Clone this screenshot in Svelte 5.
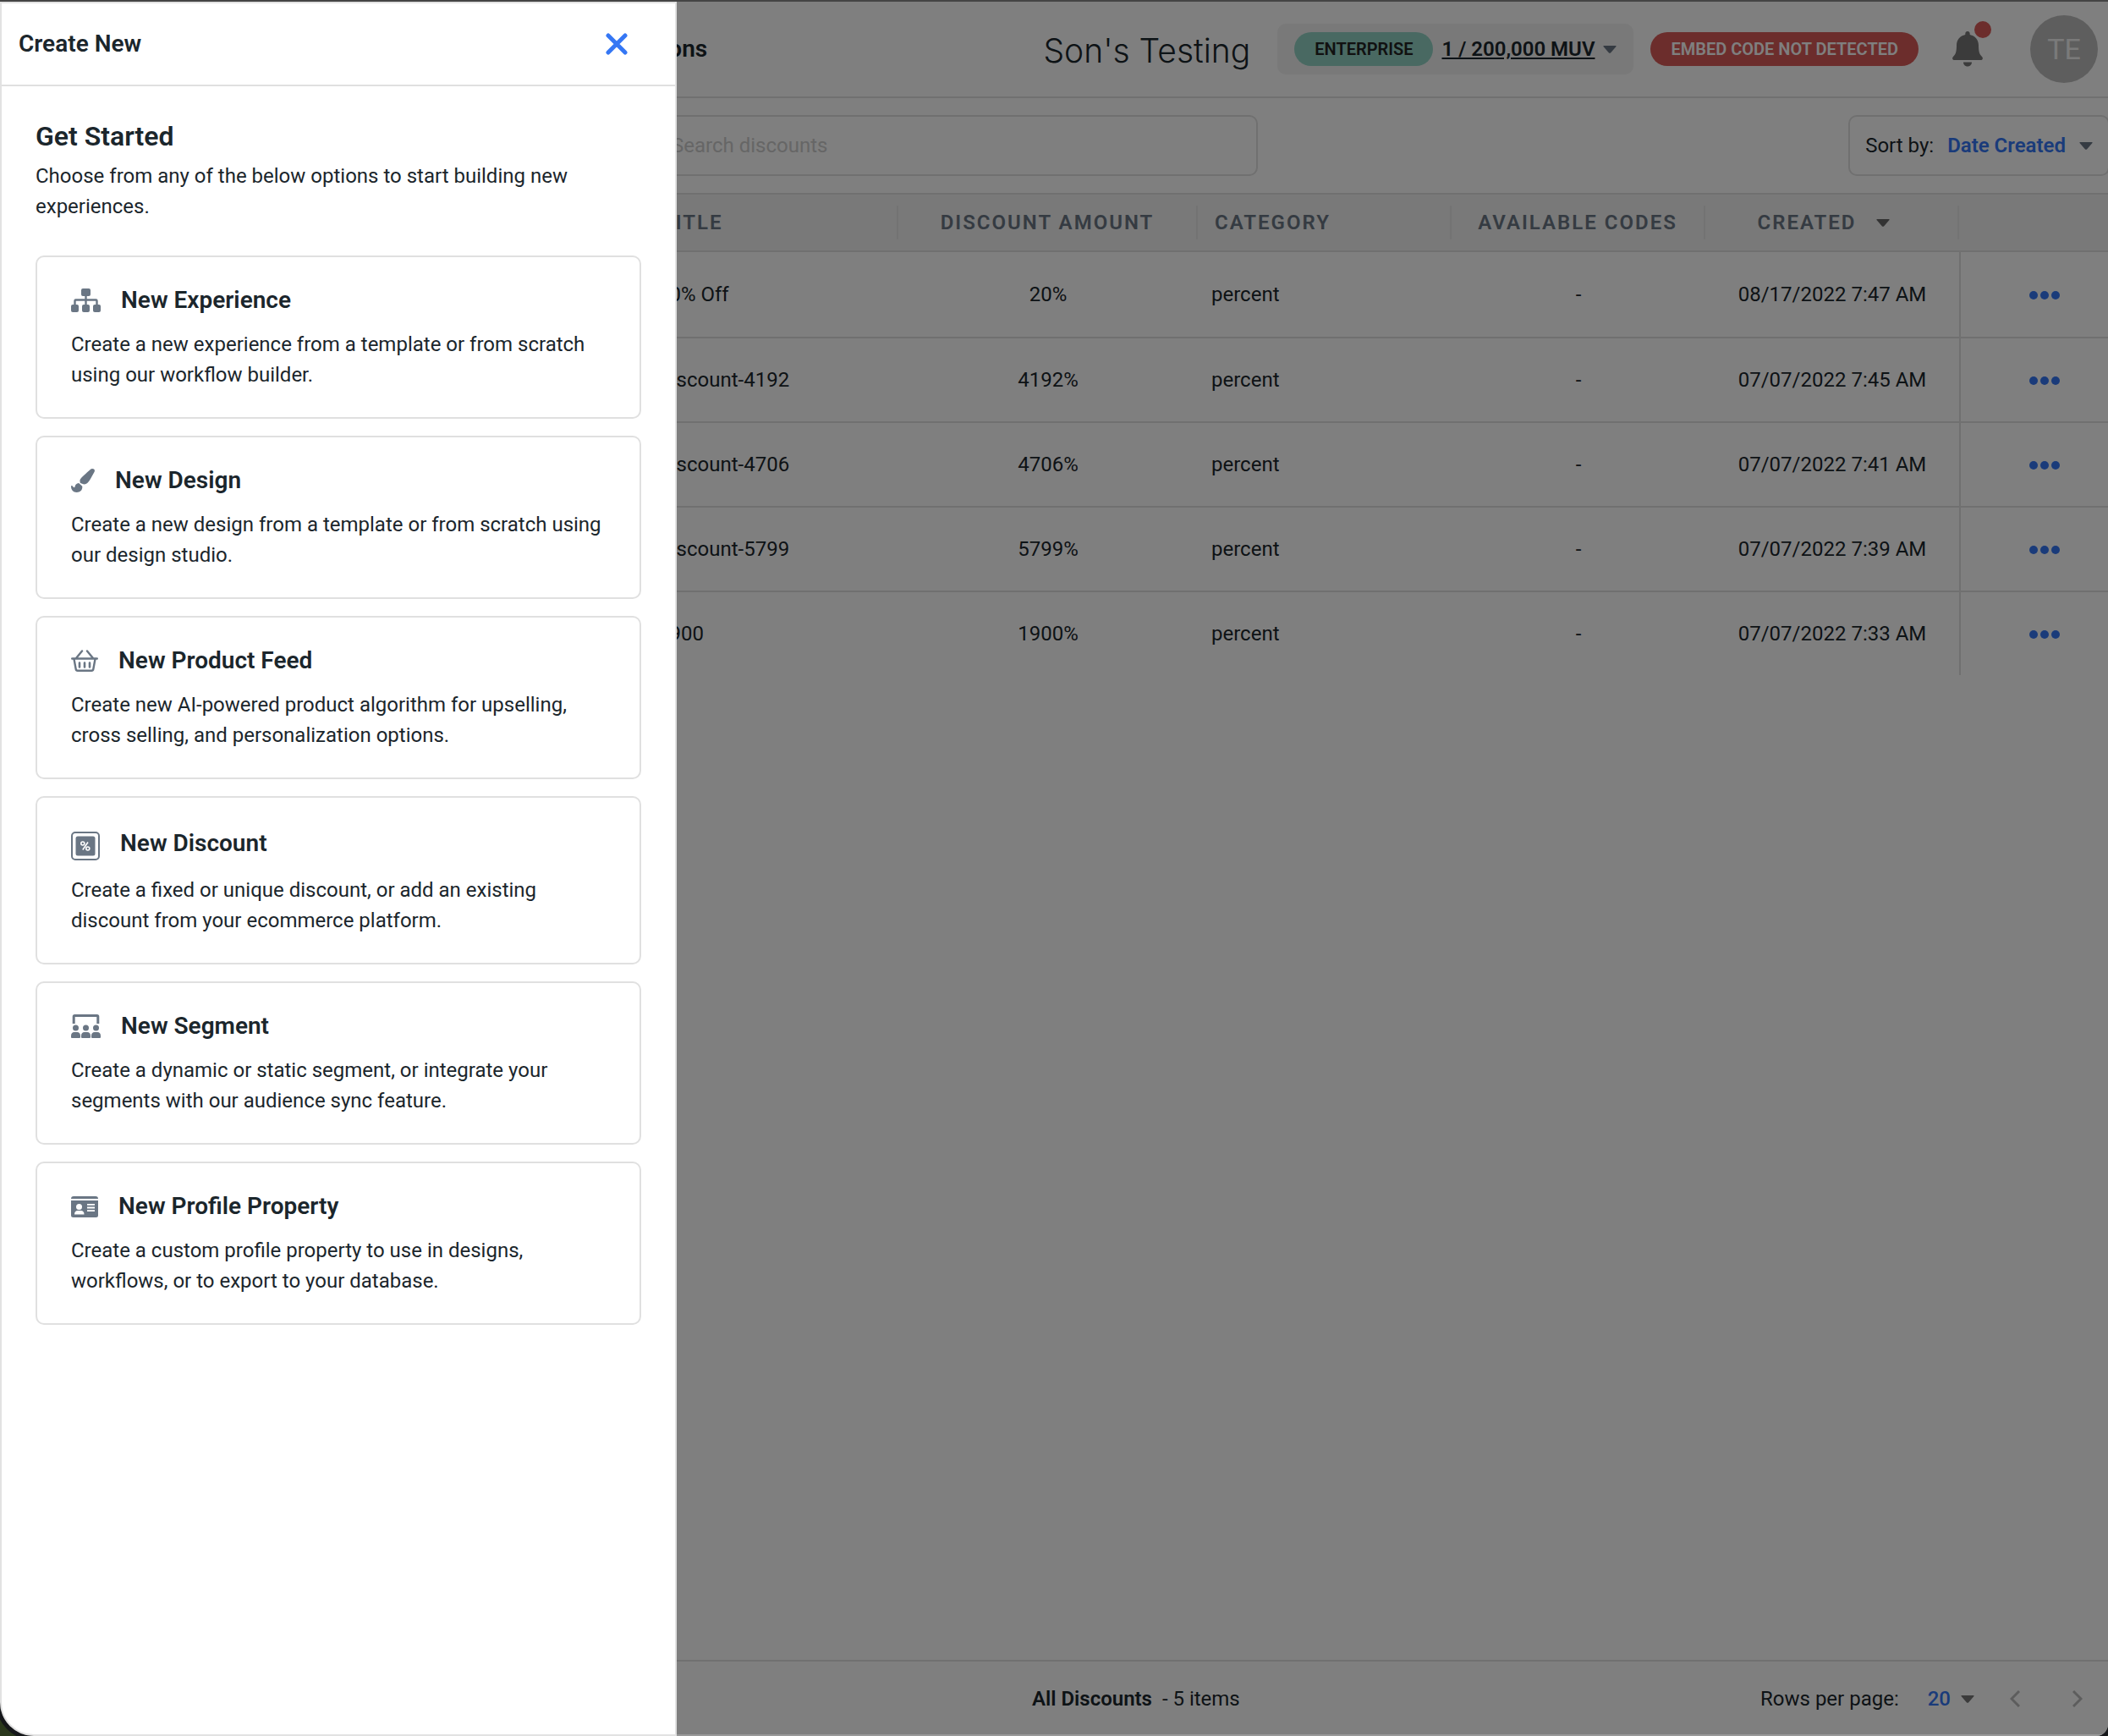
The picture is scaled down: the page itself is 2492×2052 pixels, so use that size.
<script>
  const options = [
    {
      icon: "sitemap",
      title: "New Experience",
      text: "Create a new experience from a template or from scratch using our workflow builder.",
    },
    {
      icon: "brush",
      title: "New Design",
      text: "Create a new design from a template or from scratch using our design studio.",
    },
    {
      icon: "basket",
      title: "New Product Feed",
      text: "Create new AI-powered product algorithm for upselling, cross selling, and personalization options.",
    },
    {
      icon: "discount",
      title: "New Discount",
      text: "Create a fixed or unique discount, or add an existing discount from your ecommerce platform.",
    },
    {
      icon: "segment",
      title: "New Segment",
      text: "Create a dynamic or static segment, or integrate your segments with our audience sync feature.",
    },
    {
      icon: "profile",
      title: "New Profile Property",
      text: "Create a custom profile property to use in designs, workflows, or to export to your database.",
    },
  ];

  const discounts = [
    { title: "20% Off", amount: "20%", created: "08/17/2022 7:47 AM" },
    { title: "Discount-4192", amount: "4192%", created: "07/07/2022 7:45 AM" },
    { title: "Discount-4706", amount: "4706%", created: "07/07/2022 7:41 AM" },
    { title: "Discount-5799", amount: "5799%", created: "07/07/2022 7:39 AM" },
    { title: "1900", amount: "1900%", created: "07/07/2022 7:33 AM" },
  ];

  let search = $state("");
  let open = $state(true);
</script>

{#snippet caret()}
  <svg class="caret" width="16" height="9" viewBox="0 0 16 9" aria-hidden="true">
    <path d="M1 0h14q1 0 .5 1L9 8.400q-1 .8-2 0L.5 1Q0 0 1 0z" />
  </svg>
{/snippet}

{#snippet optionIcon(name)}
  {#if name === "sitemap"}
    <svg width="35" height="28" viewBox="0 0 35 28" aria-hidden="true">
      <rect x="12" y="0" width="11" height="9" rx="2" />
      <path d="M17.500 8v11M4.500 19v-4.500q0-1 1-1h24q1 0 1 1V19" fill="none" stroke="currentColor" stroke-width="2.400" />
      <rect x="0" y="19" width="9" height="9" rx="2" />
      <rect x="13" y="19" width="9" height="9" rx="2" />
      <rect x="26" y="19" width="9" height="9" rx="2" />
    </svg>
  {:else if name === "brush"}
    <svg width="28" height="28" viewBox="0 0 512 512" aria-hidden="true">
      <path d="M167 309c-47 1-84 39-84 86 0 5-6 12-17 10-20-9-36-40-50-40-8 0-16 6-16 16 0 77 44 131 123 131 67 0 121-38 121-117 0-5-1-9-2-14zM458 0c-15 0-30 7-41 17C213 199 192 214 192 270c0 14 3 28 9 41l63 23c7 2 14 3 22 3 64 0 100-46 211-254 7-14 14-29 14-44 0-24-26-39-53-39z" />
    </svg>
  {:else if name === "basket"}
    <svg width="32" height="26" viewBox="0 0 32 26" aria-hidden="true">
      <g fill="none" stroke="currentColor" stroke-linecap="round" stroke-linejoin="round">
        <path d="M6 10l7-8.500M26 10l-7-8.500M1.200 10.500h29.600" stroke-width="2.400" />
        <path d="M3.500 11l2.200 12q.3 1.700 2 1.700h16.600q1.700 0 2-1.700l2.200-12" stroke-width="2.400" />
        <path d="M10 15.500v5M16 15.500v5M22 15.500v5" stroke-width="2.600" />
      </g>
    </svg>
  {:else if name === "discount"}
    <svg width="34" height="42" viewBox="0 -7 34 42" aria-hidden="true">
      <rect x="1" y="1" width="32" height="32" rx="4" fill="none" stroke="currentColor" stroke-width="2" />
      <rect x="5.500" y="5.500" width="23" height="23" rx="2.500" />
      <g fill="none" stroke="#fff" stroke-width="1.600">
        <circle cx="13.800" cy="14" r="2" />
        <circle cx="19.800" cy="20" r="2" />
        <path d="M20 12.500l-6.200 9" />
      </g>
    </svg>
  {:else if name === "segment"}
    <svg width="35" height="28" viewBox="0 0 35 28" aria-hidden="true">
      <path d="M3.200 11V2.500q0-1 1-1h26.600q1 0 1 1V11" fill="none" stroke="currentColor" stroke-width="3" />
      <circle cx="5.500" cy="16" r="3.500" />
      <circle cx="17.500" cy="16" r="3.500" />
      <circle cx="29.500" cy="16" r="3.500" />
      <path d="M0 27v-1.500q0-4.500 4-4.500h3q4 0 4 4.500v1.500q0 1-1 1h-9q-1 0-1-1zM12 27v-1.500q0-4.500 4-4.500h3q4 0 4 4.500v1.500q0 1-1 1h-9q-1 0-1-1zM24 27v-1.500q0-4.500 4-4.500h3q4 0 4 4.500v1.500q0 1-1 1h-9q-1 0-1-1z" />
    </svg>
  {:else}
    <svg width="32" height="25" viewBox="0 0 32 25" aria-hidden="true">
      <path d="M0 3q0-3 3-3h26q3 0 3 3zM0 5h32v17.500q0 2.500-2.500 2.500h-27q-2.500 0-2.500-2.500z" />
      <g fill="#fff">
        <circle cx="9.500" cy="12.500" r="3.500" />
        <path d="M4 21.500q0-4.500 4-4.500h3.500q4 0 4 4.500z" />
        <path d="M19 9h9v1.800h-9zM19 12.600h9v1.800h-9zM19 16.200h9V18h-9z" />
      </g>
    </svg>
  {/if}
{/snippet}

<div class="window">
  <div class="page">
    <header class="topbar">
      <h1>Promotions</h1>
      <div class="account">
        <span class="company">Son's Testing</span>
        <div class="plan">
          <span class="pill enterprise">ENTERPRISE</span>
          <button class="muv"><span>1 / 200,000 MUV</span>{@render caret()}</button>
        </div>
        <span class="pill missing">EMBED CODE NOT DETECTED</span>
        <button class="bell" aria-label="Notifications">
          <svg width="36" height="42" viewBox="0 0 36 42" aria-hidden="true">
            <path d="M18 0c1.700 0 2.700 1.200 2.700 2.800v1.300c6 1.300 10.300 6.200 10.300 12.400 0 7.500 1 10.500 4 13.500 1.800 1.800.8 4-1.600 4H2.600C.2 34-.8 31.800 1 30c3-3 4-6 4-13.500 0-6.200 4.300-11.100 10.300-12.400V2.800C15.300 1.200 16.300 0 18 0zM13 36.500h10C23 39.300 21 41.500 18 41.500s-5-2.200-5-5z" />
          </svg>
          <span class="dot"></span>
        </button>
        <div class="avatar">TE</div>
      </div>
    </header>

    <div class="toolbar">
      <input class="search" type="text" aria-label="Search discounts" placeholder="Search discounts" bind:value={search} />
      <button class="sort">Sort by: <strong>Date Created</strong>{@render caret()}</button>
    </div>

    <div class="table-wrapper">
      <table>
        <colgroup>
          <col />
          <col class="amount-col" />
          <col class="std-col" />
          <col class="std-col" />
          <col class="std-col" />
          <col class="action-col" />
        </colgroup>
        <thead>
          <tr>
            <th class="title"><span>TITLE</span></th>
            <th><span>DISCOUNT AMOUNT</span></th>
            <th class="category"><span>CATEGORY</span></th>
            <th><span>AVAILABLE CODES</span></th>
            <th class="created"><span>CREATED {@render caret()}</span></th>
            <th aria-label="Actions"></th>
          </tr>
        </thead>
        <tbody>
          {#each discounts as row}
            <tr>
              <td class="title">{row.title}</td>
              <td>{row.amount}</td>
              <td class="category">percent</td>
              <td>-</td>
              <td>{row.created}</td>
              <td class="actions">
                <button aria-label="More actions for {row.title}">
                  <svg width="36" height="10" viewBox="0 0 36 10" aria-hidden="true">
                    <circle cx="5" cy="5" r="5" /><circle cx="18" cy="5" r="5" /><circle cx="31" cy="5" r="5" />
                  </svg>
                </button>
              </td>
            </tr>
          {/each}
        </tbody>
      </table>
    </div>

    <footer>
      <p><strong>All Discounts</strong> &nbsp;- 5 items</p>
      <div class="pager">
        <span>Rows per page:</span>
        <button class="rows">20 {@render caret()}</button>
        <button class="arrow" aria-label="Previous page">
          <svg width="12" height="20" viewBox="0 0 12 20" aria-hidden="true"><path d="M11 1L2 10l9 9" /></svg>
        </button>
        <button class="arrow" aria-label="Next page">
          <svg width="12" height="20" viewBox="0 0 12 20" aria-hidden="true"><path d="M1 1l9 9-9 9" /></svg>
        </button>
      </div>
    </footer>
  </div>

  {#if open}
    <div class="overlay"></div>
    <aside class="drawer">
      <div class="drawer-header">
        <h2>Create New</h2>
        <button class="close" aria-label="Close" onclick={() => (open = false)}>
          <svg width="26" height="26" viewBox="0 0 26 26" aria-hidden="true"><path d="M3 3l20 20M23 3L3 23" /></svg>
        </button>
      </div>
      <div class="drawer-body">
        <h3>Get Started</h3>
        <p class="intro">Choose from any of the below options to start building new experiences.</p>
        <div class="options">
          {#each options as option}
            <button class="option">
              <span class="option-title">
                {@render optionIcon(option.icon)}
                {option.title}
              </span>
              <span class="option-text">{option.text}</span>
            </button>
          {/each}
        </div>
      </div>
    </aside>
  {/if}
</div>

<style>
  :global(body) {
    background: #2a381c;
  }
  * {
    box-sizing: border-box;
  }
  .window {
    position: relative;
    height: 100vh;
    overflow: hidden;
    border-top: 2px solid #444;
    border-radius: 0 0 14px 40px;
    box-shadow: 0 0 0 5px #15171a;
    background: #fff;
    color: #1b262c;
    font-family: Roboto, "Liberation Sans", sans-serif;
    font-size: 24px;
    line-height: 36px;
  }
  button {
    padding: 0;
    border: 0;
    background: none;
    color: inherit;
    font: inherit;
    cursor: pointer;
  }
  h1,
  h2,
  h3,
  p {
    margin: 0;
  }
  svg {
    display: block;
    flex: none;
    fill: currentColor;
  }
  .caret {
    color: #6a7684;
  }

  /* page */
  .page {
    display: flex;
    flex-direction: column;
    height: 100%;
  }
  .topbar {
    display: flex;
    align-items: center;
    justify-content: space-between;
    height: 114px;
    padding: 0 12px 0 690px;
    border-bottom: 2px solid #e0e0e0;
  }
  h1 {
    font-size: 28px;
    font-weight: 600;
  }
  .account {
    display: flex;
    align-items: center;
    gap: 20px;
  }
  .company {
    margin-right: 12px;
    padding-top: 4px;
    font-family: Inter, sans-serif;
    font-size: 39px;
    font-weight: 300;
  }
  .plan {
    display: flex;
    align-items: center;
    gap: 10px;
    height: 60px;
    padding: 0 20px;
    border-radius: 10px;
    background: #f2f2f2;
  }
  .pill {
    display: flex;
    align-items: center;
    height: 40px;
    padding: 0 24px;
    border-radius: 20px;
    font-size: 20px;
    font-weight: 600;
  }
  .enterprise {
    background: #92d3c5;
    color: #222;
  }
  .missing {
    background: #d85b58;
    color: #fff;
  }
  .muv {
    display: flex;
    align-items: center;
    gap: 10px;
    font-weight: 600;
  }
  .muv span {
    text-decoration: underline;
  }
  .bell {
    position: relative;
    margin: 0 36px 0 20px;
    color: #777;
  }
  .dot {
    position: absolute;
    top: -12px;
    right: -10px;
    width: 20px;
    height: 20px;
    border-radius: 50%;
    background: #d85b58;
  }
  .avatar {
    display: grid;
    place-items: center;
    width: 80px;
    height: 80px;
    border-radius: 50%;
    background: #bdbdbd;
    color: #f4f4f4;
    font-size: 34px;
  }

  .toolbar {
    display: flex;
    justify-content: space-between;
    margin-right: -2px;
    padding: 20px 0 20px 720px;
  }
  .search {
    width: 767px;
    height: 72px;
    padding: 0 20px 0 72px;
    border: 2px solid #e0e0e0;
    border-radius: 10px;
    background: none;
    color: inherit;
    font: inherit;
  }
  .search::placeholder {
    color: #ccc;
    opacity: 1;
  }
  .sort {
    display: flex;
    align-items: center;
    gap: 16px;
    padding: 0 18px;
    border: 2px solid #e0e0e0;
    border-radius: 10px;
  }
  .sort strong {
    color: #3577f4;
    font-weight: 600;
  }

  .table-wrapper {
    flex: 1;
    padding-left: 720px;
  }
  table {
    width: 100%;
    table-layout: fixed;
    border-collapse: separate;
    border-spacing: 0;
    text-align: center;
  }
  .amount-col {
    width: 354px;
  }
  .std-col {
    width: 300px;
  }
  .action-col {
    width: 176px;
  }
  th {
    height: 70px;
    padding: 0;
    border-top: 2px solid #e0e0e0;
    border-bottom: 2px solid #e0e0e0;
    background: #f2f2f2;
    color: #6a7684;
    font-weight: 600;
    letter-spacing: 2px;
  }
  th span {
    display: flex;
    align-items: center;
    justify-content: center;
    height: 40px;
    border-right: 2px solid #e6e6e6;
  }
  th .caret {
    margin-left: 24px;
    color: #666;
  }
  td {
    height: 100px;
    padding: 0;
    border-bottom: 2px solid #e0e0e0;
  }
  tbody tr:first-child td {
    height: 102px;
  }
  tbody tr:last-child td {
    height: 98px;
    border-bottom: 0;
  }
  .title,
  .category {
    text-align: left;
  }
  th.title span,
  th.category span {
    justify-content: flex-start;
    padding-left: 20px;
  }
  td.title {
    padding-left: 58px;
  }
  th.title span {
    padding-left: 62px;
  }
  td.category {
    padding-left: 16px;
  }
  th.created span {
    padding-right: 18px;
  }
  .actions {
    border-left: 2px solid #e0e0e0;
    color: #3577f4;
  }
  .actions button {
    padding: 13px 24px 13px 48px;
    vertical-align: middle;
  }

  footer {
    display: flex;
    align-items: center;
    justify-content: space-between;
    height: 90px;
    padding: 0 30px 0 1220px;
    border-top: 2px solid #e0e0e0;
  }
  footer strong {
    font-weight: 600;
  }
  .pager {
    display: flex;
    align-items: center;
  }
  .rows {
    display: flex;
    align-items: center;
    gap: 12px;
    margin: 0 42px 0 34px;
    color: #3577f4;
    font-weight: 500;
  }
  .rows .caret {
    color: #777;
  }
  .arrow + .arrow {
    margin-left: 62px;
  }
  .arrow path {
    fill: none;
    stroke: #bbb;
    stroke-width: 3;
  }

  .overlay {
    position: absolute;
    inset: 0;
    background: rgba(0, 0, 0, 0.5);
    border-bottom: 2px solid #999;
  }

  /* drawer */
  .drawer {
    position: absolute;
    inset: 0 auto 0 0;
    width: 800px;
    border: 2px solid #e2e2e2;
    background: #fff;
    border-bottom-left-radius: 40px;
  }
  .drawer-header {
    display: flex;
    align-items: center;
    justify-content: space-between;
    height: 98px;
    padding: 0 56px 0 20px;
    border-bottom: 2px solid #e0e0e0;
  }
  h2 {
    font-size: 28px;
    font-weight: 600;
  }
  .close path {
    fill: none;
    stroke: #3577f4;
    stroke-width: 5;
    stroke-linecap: round;
  }
  .drawer-body {
    padding: 40px;
  }
  h3 {
    font-size: 32px;
    font-weight: 600;
    line-height: 38px;
  }
  .intro {
    margin: 10px 0 40px;
  }
  .options {
    display: flex;
    flex-direction: column;
    gap: 20px;
  }
  .option {
    display: block;
    width: 100%;
    padding: 33px 40px 32px;
    border: 2px solid #e0e0e0;
    border-radius: 10px;
    text-align: left;
  }
  .option-title {
    display: flex;
    align-items: center;
    gap: 24px;
    margin-bottom: 16px;
    font-size: 28px;
    font-weight: 600;
  }
  .option-title svg {
    color: #6a7684;
  }
  .option-text {
    display: block;
  }
</style>
